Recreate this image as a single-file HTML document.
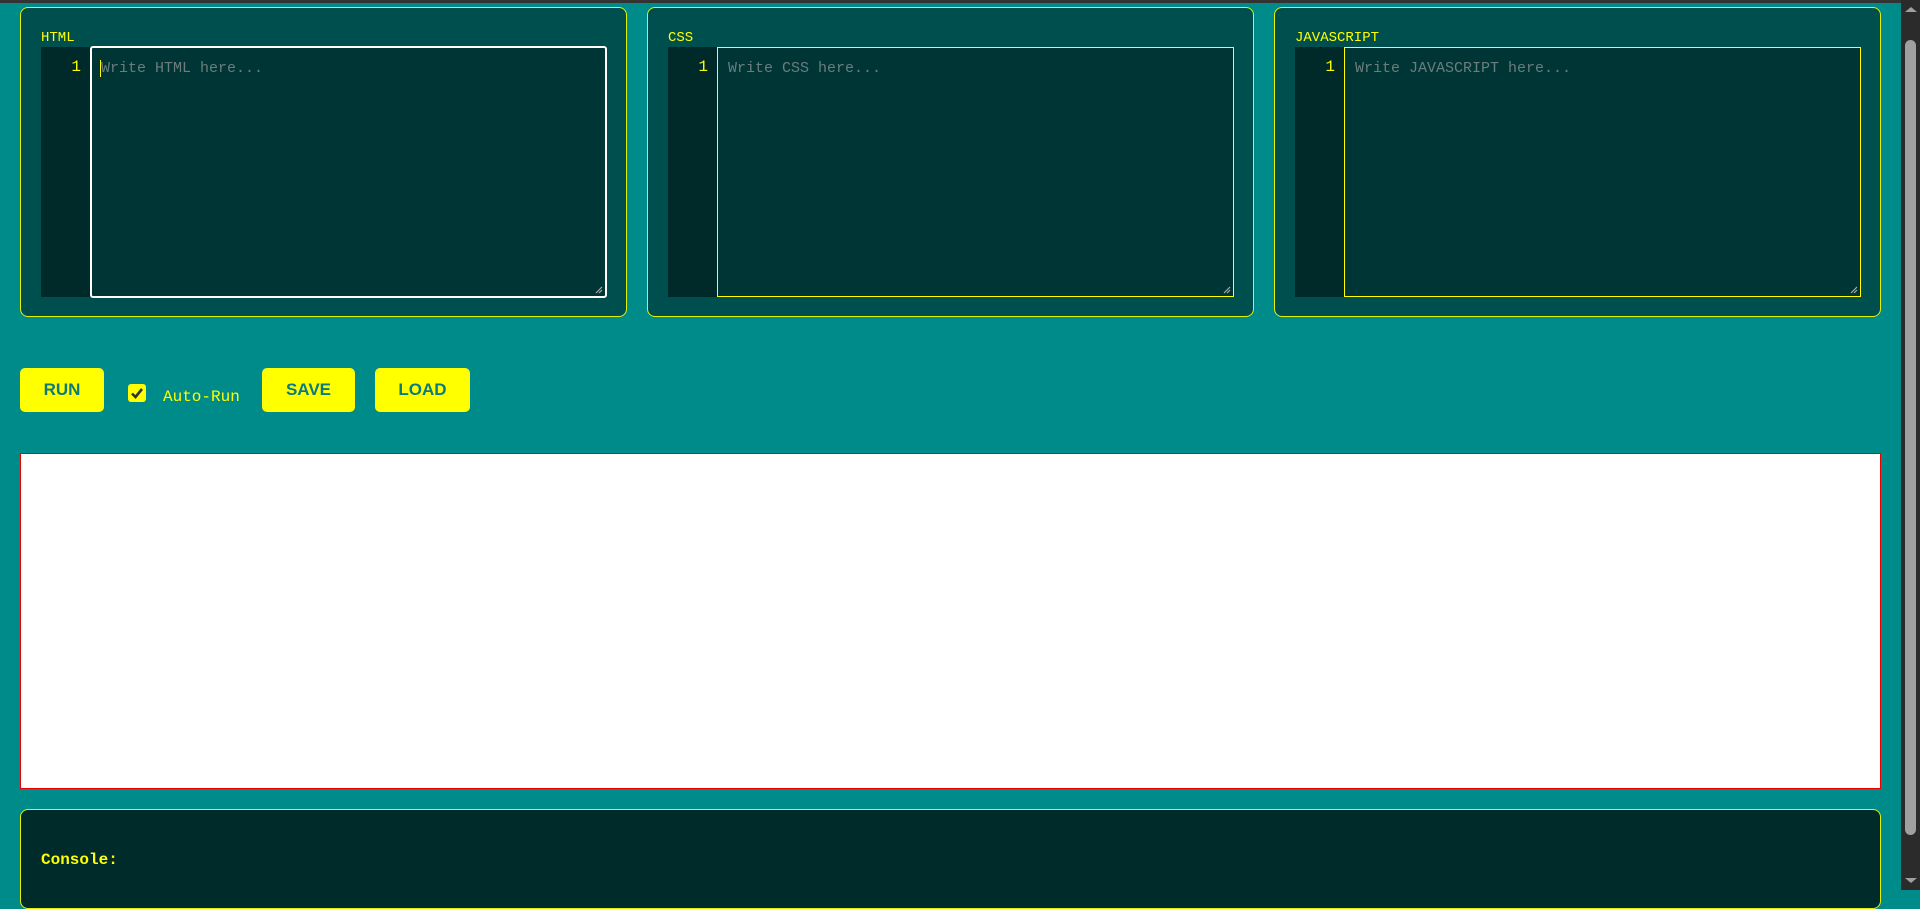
<!DOCTYPE html>
<html><head><meta charset="utf-8"><style>
*{box-sizing:border-box;margin:0;padding:0}
html,body{width:1920px;height:890px;overflow:hidden;background:#008b8b;font-family:"Liberation Mono",monospace}
.topbar{position:absolute;left:0;top:0;width:1920px;height:3px;background:#333}
.panel{position:absolute;top:7px;width:607px;height:310px;background:#004f4f;border:1.5px solid #e6f000;border-radius:8px}
.lbl{position:absolute;left:20px;top:22px;color:#ffff00;font-size:14px}
.gut{position:absolute;left:20px;top:39px;width:49px;height:250px;background:#002a2a;color:#ffff00;font-size:16px;text-align:right;padding:11px 9px 0 0}
.ta{position:absolute;left:69px;top:39px;width:517px;height:250px;background:#003535;border:1.5px solid #ffff00;color:#6b7d7d;font-size:15px;padding:12px 10px}
.ta.f{border:2px solid #fff;border-radius:3px;top:38px;height:252px}
.grip{position:absolute;right:2px;bottom:2px;width:8px;height:8px}
.btn{position:absolute;top:368px;height:44px;background:#ffff00;border-radius:5px;color:#0b7b7b;font:bold 17px "Liberation Sans",sans-serif;text-align:center;line-height:44px}
.cb{position:absolute;left:128px;top:384px;width:18px;height:18px;background:#ffff00;border-radius:3px}
.frame{position:absolute;left:20px;top:453px;width:1861px;height:336px;background:#fff;border:1px solid #e00}
.con{position:absolute;left:20px;top:809px;width:1861px;height:100px;background:#002b2b;border:1.5px solid #e6f000;border-radius:8px}
.con span{position:absolute;left:20px;top:41px;color:#ffff00;font-weight:bold;font-size:16px}
.sb{position:absolute;left:1901px;top:0;width:19px;height:890px;background:#2b2b2b}
.thumb{position:absolute;left:4px;width:11px;background:#a0a0a0;border-radius:6px}
</style></head><body>
<div class="topbar"></div>
<div class="panel" style="left:20px"><div class="lbl">HTML</div><div class="gut">1</div><div class="ta f"><span style="border-left:1.5px solid #ff0;margin-left:-2px"></span>Write HTML here...<svg class="grip" viewBox="0 0 8 8"><path d="M1 7L7 1M4 7L7 4" stroke="#aaa" stroke-width="1.2"/></svg></div></div>
<div class="panel" style="left:647px"><div class="lbl">CSS</div><div class="gut">1</div><div class="ta">Write CSS here...<svg class="grip" viewBox="0 0 8 8"><path d="M1 7L7 1M4 7L7 4" stroke="#aaa" stroke-width="1.2"/></svg></div></div>
<div class="panel" style="left:1274px"><div class="lbl">JAVASCRIPT</div><div class="gut">1</div><div class="ta">Write JAVASCRIPT here...<svg class="grip" viewBox="0 0 8 8"><path d="M1 7L7 1M4 7L7 4" stroke="#aaa" stroke-width="1.2"/></svg></div></div>
<div class="btn" style="left:20px;width:84px">RUN</div>
<div class="cb"><svg width="18" height="18" viewBox="0 0 18 18"><path d="M4 9.5l3.5 3.5L14 5" stroke="#333" stroke-width="2.6" fill="none"/></svg></div>
<div style="position:absolute;left:163px;top:388px;color:#ffff00;font-size:16px">Auto-Run</div>
<div class="btn" style="left:262px;width:93px">SAVE</div>
<div class="btn" style="left:375px;width:95px">LOAD</div>
<div class="frame"></div>
<div class="con"><span>Console:</span></div>
<div class="sb"><div style="position:absolute;left:4px;top:7px;width:0;height:0;border-left:6px solid transparent;border-right:6px solid transparent;border-bottom:5px solid #a0a0a0"></div><div class="thumb" style="top:40px;height:795px"></div><div style="position:absolute;left:4px;top:878px;width:0;height:0;border-left:6px solid transparent;border-right:6px solid transparent;border-top:5px solid #a0a0a0"></div></div>
</body></html>
